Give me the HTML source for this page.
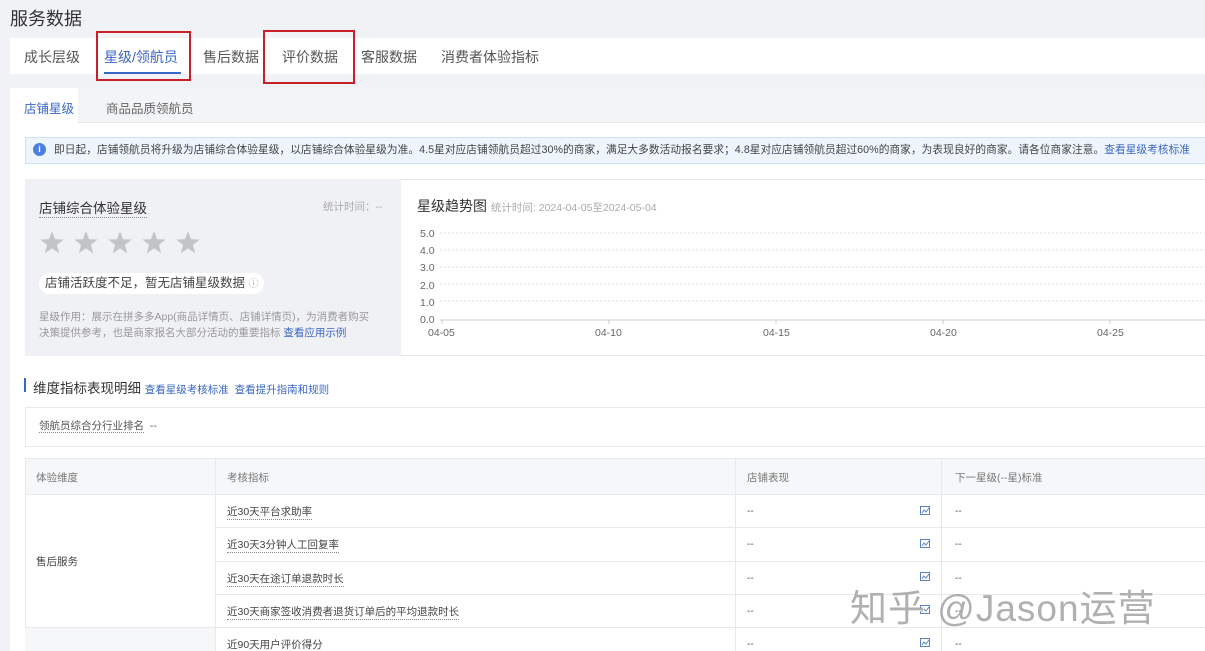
<!DOCTYPE html>
<html><head><meta charset="utf-8"><style>
*{margin:0;padding:0;box-sizing:border-box}
html,body{width:1205px;height:651px;overflow:hidden}
body{background:#f0f2f5;font-family:"Liberation Sans","Noto Sans CJK SC",sans-serif;color:#333;position:relative;font-size:12px}
.a{position:absolute;white-space:nowrap}
.blue{color:#3a66c4}
.dot{border-bottom:1px dotted #888}
</style></head><body>
<div class="a" style="left:10px;top:5px;font-size:18px;color:#333">服务数据</div>
<div class="a" style="left:10px;top:38px;width:1195px;height:36px;background:#fff"></div>
<div class="a" style="left:24px;top:47px;font-size:14px;color:#555">成长层级</div>
<div class="a blue" style="left:104px;top:47px;font-size:14px">星级/领航员</div>
<div class="a" style="left:104px;top:72px;width:77px;height:2px;background:#3a66c4"></div>
<div class="a" style="left:203px;top:47px;font-size:14px;color:#555">售后数据</div>
<div class="a" style="left:282px;top:47px;font-size:14px;color:#555">评价数据</div>
<div class="a" style="left:361px;top:47px;font-size:14px;color:#555">客服数据</div>
<div class="a" style="left:441px;top:47px;font-size:14px;color:#555">消费者体验指标</div>
<div class="a" style="left:96px;top:31px;width:95px;height:50px;border:2px solid #c8202a"></div>
<div class="a" style="left:263px;top:30px;width:92px;height:54px;border:2px solid #c8202a"></div>

<div class="a" style="left:10px;top:88px;width:1195px;height:563px;background:#fff"></div>
<div class="a" style="left:10px;top:88px;width:1195px;height:35px;background:#f3f4f6;border-bottom:1px solid #e5e6ea"></div>
<div class="a" style="left:10px;top:88px;width:68px;height:36px;background:#fff"></div>
<div class="a blue" style="left:24px;top:98px;font-size:12.5px">店铺星级</div>
<div class="a" style="left:106px;top:98px;font-size:12.5px;color:#666">商品品质领航员</div>

<div class="a" style="left:25px;top:137px;width:1185px;height:27px;background:#eef5fd;border:1px solid #cfe1f5"></div>
<div class="a" style="left:33px;top:143px;width:13px;height:13px;border-radius:50%;background:#4d7fe0;color:#fff;font-size:9px;text-align:center;line-height:13px;font-weight:bold">i</div>
<div class="a" style="left:54px;top:142px;font-size:10.7px;color:#444;letter-spacing:0.05px">即日起，店铺领航员将升级为店铺综合体验星级，以店铺综合体验星级为准。4.5星对应店铺领航员超过30%的商家，满足大多数活动报名要求；4.8星对应店铺领航员超过60%的商家，为表现良好的商家。请各位商家注意。<span class="blue">查看星级考核标准</span></div>

<div class="a" style="left:25px;top:179px;width:1185px;height:177px;border:1px solid #e5e6ea;background:#fff"></div>
<div class="a" style="left:25px;top:179px;width:376px;height:177px;background:#f0f1f4"></div>
<div class="a dot" style="left:39px;top:197px;font-size:13.5px;color:#333">店铺综合体验星级</div>
<div class="a" style="left:323px;top:199px;font-size:10.5px;color:#aaa">统计时间：--</div>
<svg class="a" style="left:40px;top:231px" width="165" height="25"><defs><path id="s" d="M12 0l3.1 8.2 8.6.3-6.8 5.4 2.4 8.4L12 17.4 4.7 22.3l2.4-8.4L.3 8.5l8.6-.3z" fill="#c3c4c7"/></defs><use href="#s" x="0"/><use href="#s" x="34"/><use href="#s" x="68"/><use href="#s" x="102"/><use href="#s" x="136"/></svg>
<div class="a" style="left:39px;top:273px;height:21px;padding:0 6px;border-radius:11px;background:#fff;font-size:12.5px;line-height:21px;color:#444">店铺活跃度不足，暂无店铺星级数据 <span style="color:#aaa;font-size:10px">ⓘ</span></div>
<div class="a" style="left:39px;top:309px;font-size:10.5px;color:#999;line-height:16px">星级作用：展示在拼多多App(商品详情页、店铺详情页)，为消费者购买<br>决策提供参考，也是商家报名大部分活动的重要指标 <span class="blue">查看应用示例</span></div>

<div class="a" style="left:417px;top:196px;font-size:14px;color:#333">星级趋势图 <span style="font-size:10.5px;color:#aaa">统计时间: 2024-04-05至2024-05-04</span></div>
<div class="a" style="left:420px;top:226px;font-size:10.5px;color:#666;line-height:17.2px">5.0<br>4.0<br>3.0<br>2.0<br>1.0<br>0.0</div>
<svg class="a" style="left:438px;top:225px" width="767" height="100"><g stroke="#e0e0e0" stroke-dasharray="2 2"><line x1="2" y1="8" x2="767" y2="8"/><line x1="2" y1="25" x2="767" y2="25"/><line x1="2" y1="42" x2="767" y2="42"/><line x1="2" y1="59" x2="767" y2="59"/><line x1="2" y1="76" x2="767" y2="76"/></g><line x1="2" y1="95" x2="767" y2="95" stroke="#ccc"/><g stroke="#ccc"><line x1="4" y1="95" x2="4" y2="99"/><line x1="171" y1="95" x2="171" y2="99"/><line x1="338" y1="95" x2="338" y2="99"/><line x1="505" y1="95" x2="505" y2="99"/><line x1="672" y1="95" x2="672" y2="99"/></g></svg>
<div class="a" style="left:428px;top:327px;font-size:10.5px;color:#666">04-05</div>
<div class="a" style="left:595px;top:327px;font-size:10.5px;color:#666">04-10</div>
<div class="a" style="left:763px;top:327px;font-size:10.5px;color:#666">04-15</div>
<div class="a" style="left:930px;top:327px;font-size:10.5px;color:#666">04-20</div>
<div class="a" style="left:1097px;top:327px;font-size:10.5px;color:#666">04-25</div>

<div class="a" style="left:24px;top:378px;width:2px;height:14px;background:#3a66c4"></div>
<div class="a" style="left:33px;top:377px;font-size:13.5px;color:#333">维度指标表现明细 <span class="blue" style="font-size:10.5px">查看星级考核标准 &nbsp;查看提升指南和规则</span></div>
<div class="a" style="left:25px;top:407px;width:1185px;height:40px;border:1px solid #e8e9ec"></div>
<div class="a" style="left:39px;top:418px;font-size:10.5px;color:#555"><span class="dot">领航员综合分行业排名</span> &nbsp;--</div>

<div class="a" style="left:25px;top:458px;width:1185px;height:200px;border:1px solid #e8e9ec"></div>
<div class="a" style="left:25px;top:458px;width:1185px;height:37px;background:#f6f7f9;border:1px solid #e8e9ec"></div>
<div class="a" style="left:25px;top:627px;width:191px;height:30px;background:#f6f7f9"></div>
<div class="a" style="left:215px;top:458px;width:1px;height:200px;background:#e8e9ec"></div>
<div class="a" style="left:735px;top:458px;width:1px;height:200px;background:#e8e9ec"></div>
<div class="a" style="left:941px;top:458px;width:1px;height:200px;background:#e8e9ec"></div>
<div class="a" style="left:215px;top:527px;width:990px;height:1px;background:#e8e9ec"></div>
<div class="a" style="left:215px;top:561px;width:990px;height:1px;background:#e8e9ec"></div>
<div class="a" style="left:215px;top:594px;width:990px;height:1px;background:#e8e9ec"></div>
<div class="a" style="left:25px;top:627px;width:1180px;height:1px;background:#e8e9ec"></div>
<div class="a" style="left:36px;top:470px;font-size:10.5px;color:#777">体验维度</div>
<div class="a" style="left:227px;top:470px;font-size:10.5px;color:#777">考核指标</div>
<div class="a" style="left:747px;top:470px;font-size:10.5px;color:#777">店铺表现</div>
<div class="a" style="left:955px;top:470px;font-size:10.5px;color:#777">下一星级(--星)标准</div>
<div class="a" style="left:36px;top:554px;font-size:10.5px;color:#444">售后服务</div>
<div class="a dot" style="left:227px;top:504px;font-size:10.5px;color:#444">近30天平台求助率</div>
<div class="a dot" style="left:227px;top:537px;font-size:10.5px;color:#444">近30天3分钟人工回复率</div>
<div class="a dot" style="left:227px;top:571px;font-size:10.5px;color:#444">近30天在途订单退款时长</div>
<div class="a dot" style="left:227px;top:604px;font-size:10.5px;color:#444">近30天商家签收消费者退货订单后的平均退款时长</div>
<div class="a dot" style="left:227px;top:637px;font-size:10.5px;color:#444">近90天用户评价得分</div>
<div class="a" style="left:747px;top:495px;font-size:10px;color:#555;line-height:33.3px">--<br>--<br>--<br>--<br>--</div>
<div class="a" style="left:955px;top:495px;font-size:10px;color:#555;line-height:33.3px">--<br>--<br>--<br>--<br>--</div>
<svg class="a" style="left:919px;top:506px" width="12" height="145"><g fill="none" stroke="#5b82c9"><rect x="1.5" y="0.5" width="9" height="8"/><rect x="1.5" y="33.5" width="9" height="8"/><rect x="1.5" y="66.5" width="9" height="8"/><rect x="1.5" y="99.5" width="9" height="8"/><rect x="1.5" y="132.5" width="9" height="8"/><path d="M3 7l2-3 2 2 3-4M3 40l2-3 2 2 3-4M3 73l2-3 2 2 3-4M3 106l2-3 2 2 3-4M3 139l2-3 2 2 3-4"/></g></svg>
<div class="a" style="left:850px;top:578px;font-size:37px;letter-spacing:1px;color:rgba(150,150,150,0.75);text-shadow:1px 1px 0 rgba(255,255,255,.8)">知乎 @Jason运营</div>
</body></html>
